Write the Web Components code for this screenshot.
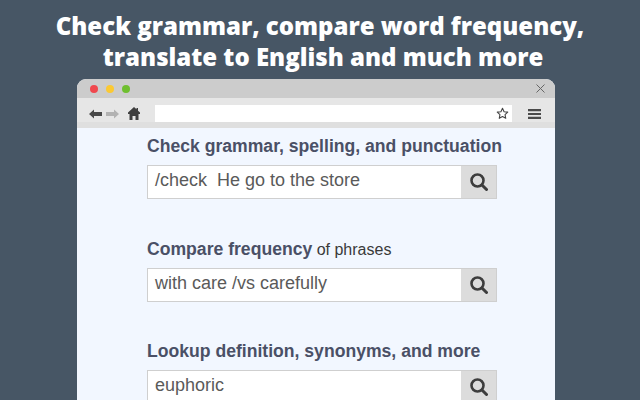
<!DOCTYPE html>
<html>
<head>
<meta charset="utf-8">
<title>Grammar tools</title>
<style>
  html, body { margin: 0; height: 400px; overflow: hidden; }
  body {
    background: #475665;
    font-family: "Liberation Sans", Arial, sans-serif;
    display: flex;
    flex-direction: column;
    align-items: center;
  }
</style>
</head>
<body>
<promo-title>Check grammar, compare word frequency,<br>&nbsp;translate to English and much more</promo-title>
<browser-window>
  <search-block query="/check  He go to the store"><b>Check grammar, spelling, and punctuation</b></search-block>
  <search-block query="with care /vs carefully"><b>Compare frequency</b> of phrases</search-block>
  <search-block query="euphoric"><b>Lookup definition, synonyms, and more</b></search-block>
</browser-window>

<script>
class PromoTitle extends HTMLElement {
  constructor() {
    super();
    this.attachShadow({ mode: "open" });
    this.shadowRoot.innerHTML = `
      <style>
        :host {
          display: block;
          height: 79px;
          box-sizing: border-box;
          padding-top: 10px;
          color: #fff;
          font: 800 24px/31px "Open Sans", sans-serif;
          text-align: center;
          white-space: nowrap;
        }
      </style>
      <slot></slot>
    `;
  }
}

class BrowserWindow extends HTMLElement {
  constructor() {
    super();
    this.attachShadow({ mode: "open" });
    this.shadowRoot.innerHTML = `
      <style>
        :host {
          display: block;
          width: 478px;
          margin-right: 8px;
          flex: 1;
          min-height: 0;
          background: #f2f7ff;
          border-radius: 9px 9px 0 0;
          overflow: hidden;
        }
        .titlebar {
          height: 19px;
          background: #cccccc;
          display: flex;
          align-items: center;
          gap: 7.8px;
          padding: 0 10px 0 13px;
        }
        .dot { width: 8px; height: 8px; border-radius: 50%; }
        .close { margin-left: auto; display: block; }
        .toolbar {
          box-sizing: border-box;
          height: 30px;
          padding: 7px 14px 0 12px;
          background: #e6e6e6;
          border-bottom: 6px solid #dfdfdf;
          display: flex;
          align-items: center;
        }
        .toolbar svg { display: block; flex: none; }
        .url {
          margin-left: 15px;
          width: 357px;
          height: 17px;
          background: #fff;
          display: flex;
          align-items: center;
          justify-content: flex-end;
          padding-right: 3px;
          box-sizing: border-box;
        }
        .menu { margin-left: auto; }
        .content { padding: 0 0 0 70px; }
      </style>
      <div class="titlebar">
        <span class="dot" style="background:#f0484e"></span>
        <span class="dot" style="background:#fbc933"></span>
        <span class="dot" style="background:#6fbf2f"></span>
        <svg class="close" width="9" height="9" viewBox="0 0 9 9"><path d="M.5.500l8 8M8.500.500l-8 8" stroke="#666" stroke-width="1" fill="none"/></svg>
      </div>
      <div class="toolbar">
        <svg width="13" height="10" viewBox="0 0 13 10"><path d="M0 5l5-4.500V3h8v4H5v2.500z" fill="#484848"/></svg>
        <svg style="margin-left:4px" width="13" height="10" viewBox="0 0 13 10"><path d="M13 5L8 .5V3H0v4h8v2.500z" fill="#b2b2b2"/></svg>
        <svg style="margin-left:9px" width="12" height="13" viewBox="0 0 12 13"><path d="M6 0L0 5.500V7h1.500v6h3V9h3v4h3V7H12V5.500L10 3.700V1H8.500v1.300z" fill="#3f3f3f"/></svg>
        <div class="url">
          <svg width="13" height="13" viewBox="0 0 24 24"><path d="M12 2.500l2.900 6.200 6.800.8-5 4.700 1.300 6.700-6-3.300-6 3.300 1.300-6.700-5-4.700 6.800-.8z" fill="#fff" stroke="#444" stroke-width="2" stroke-linejoin="round"/></svg>
        </div>
        <svg class="menu" width="13" height="10" viewBox="0 0 13 10"><path d="M0 0h13v2.200H0zM0 3.900h13v2.200H0zM0 7.800h13V10H0z" fill="#4a4a4a"/></svg>
      </div>
      <div class="content"><slot></slot></div>
    `;
  }
}

class SearchBlock extends HTMLElement {
  constructor() {
    super();
    this.attachShadow({ mode: "open" });
    this.shadowRoot.innerHTML = `
      <style>
        :host {
          display: block;
          height: 102.5px;
          color: #3a3a3a;
          font-size: 16px;
        }
        .label {
          height: 37px;
          box-sizing: border-box;
          line-height: 36px;
          white-space: nowrap;
        }
        ::slotted(b) { font-size: 17.6px; color: #4a5066; }
        .field {
          width: 350px;
          height: 34px;
          box-sizing: border-box;
          border: 1px solid #cfcfcf;
          background: #fff;
          display: flex;
        }
        .query {
          flex: 1;
          padding-left: 7px;
          font-size: 18px;
          line-height: 28px;
          color: #5a5a5a;
          white-space: pre;
        }
        .btn {
          width: 35px;
          background: #dcdcdc;
          display: flex;
          align-items: center;
          justify-content: center;
        }
        .btn svg { display: block; }
      </style>
      <div class="label"><slot></slot></div>
      <div class="field">
        <div class="query"></div>
        <div class="btn">
          <svg width="18" height="18" viewBox="0 0 18 18"><circle cx="7.500" cy="7.500" r="6" fill="none" stroke="#3d3d3d" stroke-width="2.600"/><path d="M12 12L16.500 16.500" stroke="#3d3d3d" stroke-width="3" stroke-linecap="round"/></svg>
        </div>
      </div>
    `;
    this.shadowRoot.querySelector(".query").textContent = this.getAttribute("query");
  }
}

customElements.define("promo-title", PromoTitle);
customElements.define("browser-window", BrowserWindow);
customElements.define("search-block", SearchBlock);
</script>
</body>
</html>
